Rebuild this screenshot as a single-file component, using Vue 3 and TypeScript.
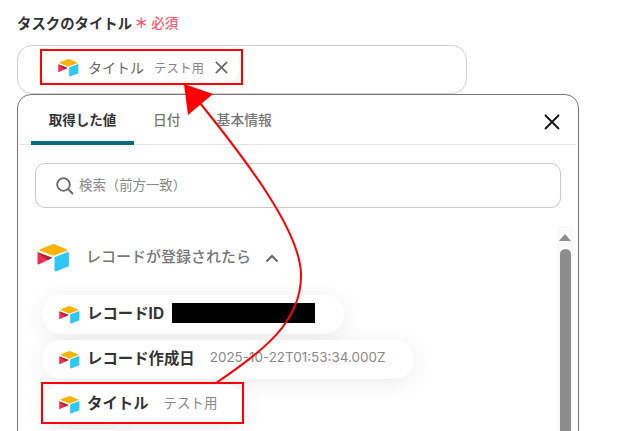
<script setup lang="ts">
const tabs = [
  { name: '取得した値', active: true },
  { name: '日付', active: false },
  { name: '基本情報', active: false },
]
const rows = [
  { name: 'レコードID', value: '', redacted: true },
  { name: 'レコード作成日', value: '2025-10-22T01:53:34.000Z', redacted: false },
  { name: 'タイトル', value: 'テスト用', redacted: false },
  { name: '', value: '', redacted: false },
]
</script>

<template>
  <div class="page">
    <svg width="0" height="0" class="defs">
      <symbol id="air" viewBox="0 0 32 28">
        <path d="M14.2.5 2.8 5.2c-.7.3-.7 1.2 0 1.500L14.300 11.300c1 .4 2.200.4 3.200 0L29 6.700c.7-.3.700-1.200 0-1.500L17.500.5c-1-.4-2.200-.4-3.300 0Z" fill="#fcb400" />
        <path d="M17 13.700V26.600c0 .6.6 1 1.200.8l12.600-4.900c.4-.1.600-.4.600-.8V8.800c0-.6-.6-1-1.200-.8L17.600 12.900c-.4.100-.6.400-.6.800Z" fill="#2ec8f5" />
        <path d="M14 14.200 9.900 16.200 1.200 20.400C.600 20.700 0 20.300 0 19.700V8.900c0-.2.100-.4.300-.5.100-.1.300-.1.500 0L13.900 13.500c.6.200.6.500.1.700Z" fill="#ec2f50" />
        <path d="M14 14.200 9.900 16.200.3 8.400c.1-.1.300-.1.500 0L13.900 13.500c.6.200.6.500.1.700Z" fill="#a8263f" />
      </symbol>
    </svg>

    <div class="label">
      <span class="label-text">タスクのタイトル</span>
      <span class="req-mark">＊</span>
      <span class="req-text">必須</span>
    </div>

    <div class="field">
      <div class="chip chip-top">
        <svg class="chip-air"><use href="#air" /></svg>
        <span class="top-name">タイトル</span>
        <span class="top-value">テスト用</span>
        <svg class="chip-x" viewBox="0 0 16 16">
          <path d="M2 2 14 14M14 2 2 14" stroke="#666" stroke-width="1.700" fill="none" />
        </svg>
      </div>
    </div>

    <div class="panel">
      <div class="tabs">
        <div v-for="t in tabs" :key="t.name" class="tab" :class="{ active: t.active }">{{ t.name }}</div>
        <svg class="close" viewBox="0 0 18 18">
          <path d="M2 2 16 16M16 2 2 16" stroke="#111" stroke-width="1.800" fill="none" />
        </svg>
      </div>

      <div class="search">
        <svg class="search-icon" viewBox="0 0 18 18">
          <circle cx="7.500" cy="7.500" r="6.300" stroke="#666" stroke-width="1.800" fill="none" />
          <path d="m12 12 5 5" stroke="#666" stroke-width="1.800" fill="none" />
        </svg>
        <span class="placeholder">検索（前方一致）</span>
      </div>

      <div class="list-area">
        <div class="list">
          <div class="section">
            <svg class="section-air"><use href="#air" /></svg>
            <span class="section-name">レコードが登録されたら</span>
            <svg class="chev" viewBox="0 0 14 9">
              <path d="M1.500 7.500 7 2l5.500 5.500" stroke="#666" stroke-width="2" fill="none" />
            </svg>
          </div>
          <div class="rows">
            <div v-for="(r, i) in rows" :key="i" class="row">
              <svg class="row-air"><use href="#air" /></svg>
              <span class="row-name">{{ r.name }}</span>
              <span v-if="r.redacted" class="redact"></span>
              <span v-else class="row-value">{{ r.value }}</span>
            </div>
          </div>
        </div>
        <div class="scrollbar">
          <div class="scroll-up"></div>
          <div class="scroll-thumb"></div>
        </div>
      </div>
    </div>

    <!-- Annotation layer over the screenshot -->
    <div class="mark mark-top"></div>
    <div class="mark mark-row"></div>
    <svg class="arrow" viewBox="0 0 619 431" width="619" height="431">
      <path d="M216 383C262 352 302 322 301 274 300 232 250 165 200 103" stroke="#f00" stroke-width="2" fill="none" />
      <polygon points="184 84 213 94 188 115" fill="#f00" />
    </svg>
  </div>
</template>

<style>
html, body { margin: 0; height: 431px; overflow: hidden; background: #fff; }
</style>

<style scoped>
.page {
  position: relative;
  width: 619px;
  height: 431px;
  overflow: hidden;
  padding: 13px 0 0 17px;
  box-sizing: border-box;
  font-family: "Noto Sans CJK JP", "Noto Sans", sans-serif;
  background: #fff;
}
.defs { position: absolute; }
.label { display: flex; align-items: center; height: 18px; margin-bottom: 14px; }
.label-text { font-size: 14.400px; font-weight: 700; color: #333; }
.req-mark { font-size: 14px; font-weight: 700; color: #ff5a6e; margin-left: 1px; width: 16px; text-align: center; }
.req-text { font-size: 13.500px; font-weight: 500; color: #ff5a6e; margin-left: 2px; }
.field {
  width: 450px;
  height: 49px;
  box-sizing: border-box;
  border: 1px solid #d2d2d6;
  border-radius: 15px;
  padding: 5px 0 0 23px;
}
.chip {
  display: flex;
  align-items: center;
  background: #fff;
  border-radius: 20px;
  box-shadow: 0 2px 12px rgba(0, 0, 0, 0.08);
}
.chip-top { width: 199px; height: 32px; padding-left: 17px; box-sizing: border-box; }
.chip-air { width: 21px; height: 18px; margin: 2px 9px 0 0; }
.top-name { font-size: 14px; color: #666; font-weight: 400; width: 66px; }
.top-value { font-size: 12.500px; color: #888; width: 61px; }
.chip-x { width: 15px; height: 15px; margin-left: -1px; }
.panel {
  width: 562px;
  height: 400px;
  position: relative;
  box-sizing: border-box;
  border: 1px solid #777;
  border-radius: 14px;
  background: #fff;
  padding: 0 2px;
}
.tabs {
  display: flex;
  height: 50px;
  box-sizing: border-box;
  border-bottom: 1px solid #e4e4e6;
  padding-left: 11px;
  align-items: flex-start;
  position: relative;
}
.tab {
  font-size: 13.800px;
  font-weight: 500;
  color: #777;
  height: 49px;
  line-height: 49px;
  padding: 0 18px;
  box-sizing: border-box;
}
.tab.active {
  color: #333;
  font-weight: 700;
  font-size: 13.500px;
  width: 103px;
  margin-right: 1px;
  text-align: center;
  padding: 0;
  border-bottom: 4px solid #0d6a80;
  border-radius: 4px 4px 0 0;
  height: 50px;
}
.close { position: absolute; right: 15px; top: 18px; width: 18px; height: 18px; }
.search {
  margin: 18px 15px 0 15px;
  height: 45px;
  box-sizing: border-box;
  border: 1px solid #c8c8c8;
  border-radius: 10px;
  display: flex;
  align-items: center;
  padding-left: 20px;
}
.search-icon { width: 18px; height: 18px; margin-right: 5px; }
.placeholder { font-size: 13.400px; color: #888; margin-bottom: 4px; }
.list-area { display: flex; margin-top: 18px; }
.list { width: 537px; }
.section { display: flex; align-items: center; height: 30px; margin: 17px 0 0 17px; }
.section-air { width: 33px; height: 28px; margin-right: 16px; }
.section-name { font-size: 15px; font-weight: 500; color: #777; margin-bottom: 6px; }
.chev { width: 14px; height: 9px; margin-left: 14px; }
.rows {
  display: flex;
  flex-direction: column;
  align-items: flex-start;
  gap: 6px;
  margin: 22px 0 0 22px;
}
.row {
  display: flex;
  align-items: center;
  height: 39px;
  padding: 0 29px 0 17px;
  background: #fff;
  border-radius: 20px;
  box-shadow: 0 4px 22px rgba(0, 0, 0, 0.08);
  box-sizing: border-box;
}
.row-air { width: 21px; height: 18px; margin-right: 7px; }
.row-name { font-size: 15.400px; font-weight: 700; color: #333; font-family: "Inter", "Noto Sans CJK JP", sans-serif; margin-bottom: 6px; }
.row-value { font-size: 13.450px; color: #888; margin-left: 15px; margin-bottom: 6px; font-family: "Inter", "Noto Sans CJK JP", sans-serif; }
.redact { width: 143px; height: 20px; background: #000; margin: 0 0 3px 8px; }
.scrollbar {
  width: 16px;
  height: 300px;
  background: #fafafa;
  display: flex;
  flex-direction: column;
  align-items: center;
}
.scroll-up {
  width: 0;
  height: 0;
  margin-top: 8px;
  border-left: 6.500px solid transparent;
  border-right: 6.500px solid transparent;
  border-bottom: 7px solid #8c8c8c;
}
.scroll-thumb { width: 11px; flex: 1; margin-top: 8px; background: #8c8c8c; border-radius: 6px 6px 0 0; }
.mark {
  position: absolute;
  box-sizing: border-box;
  border: 2px solid #f00;
}
.mark-top { left: 40px; top: 49px; width: 203px; height: 36px; }
.mark-row { left: 41px; top: 382px; width: 203px; height: 42px; }
.arrow { position: absolute; left: 0; top: 0; pointer-events: none; }
</style>
